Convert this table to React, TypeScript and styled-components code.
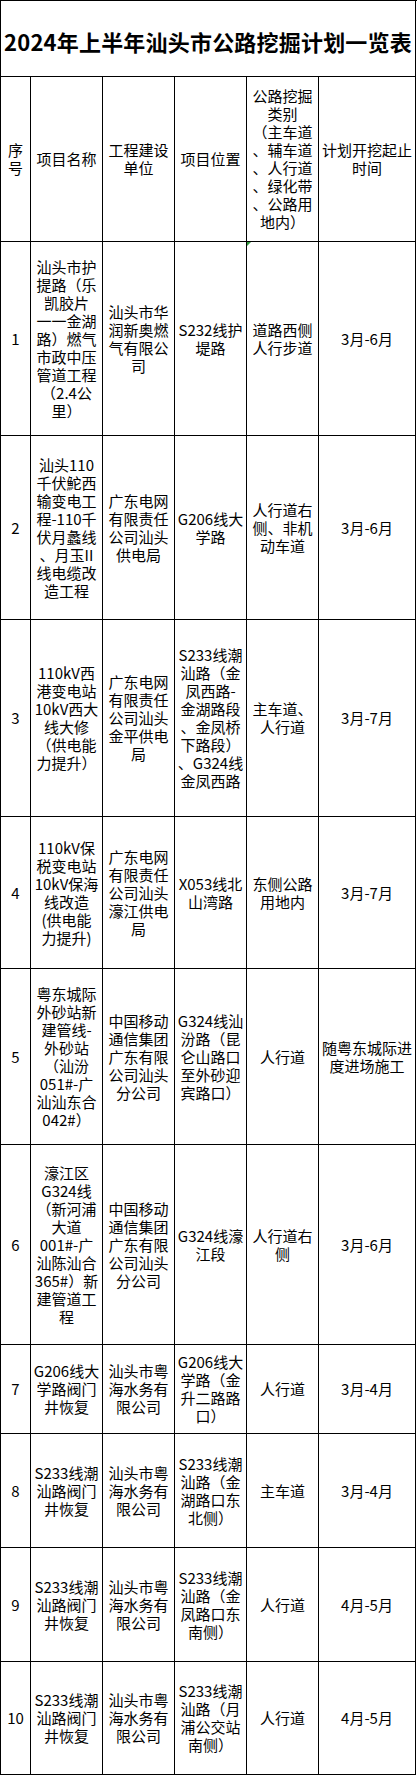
import styled, { createGlobalStyle } from "styled-components";

const GlobalStyle = createGlobalStyle`
  html, body {
    margin: 0;
    padding: 0;
    background: #ffffff;
  }
  body {
    font-family: "Noto Sans CJK SC", "Noto Sans", sans-serif;
    color: #000000;
  }
`;

const ROW_HEIGHTS = [165, 194, 184, 197, 152, 176, 200, 89, 114, 114, 113];

const Sheet = styled.div`
  width: 416px;
  display: grid;
  grid-template-columns: 30px 72px 72px 72px 72px 97px;
  grid-template-rows: 76px ${ROW_HEIGHTS.map((h) => `${h}px`).join(" ")};
  border-left: 1px solid #000;
  border-top: 1px solid #000;
  box-sizing: content-box;
`;

const Title = styled.div`
  grid-column: 1 / -1;
  display: flex;
  align-items: center;
  justify-content: center;
  padding-top: 5px;
  box-sizing: border-box;
  border-right: 1px solid #000;
  border-bottom: 1px solid #000;
  font-size: 22px;
  font-weight: 700;
  letter-spacing: 0.2px;
  white-space: nowrap;
`;

const Cell = styled.div`
  position: relative;
  display: flex;
  flex-direction: column;
  align-items: center;
  justify-content: center;
  box-sizing: border-box;
  border-right: 1px solid #000;
  border-bottom: 1px solid #000;
  font-size: 15px;
  line-height: 18px;
  text-align: center;
  overflow: hidden;
`;

const Line = styled.span`
  display: block;
  white-space: nowrap;
`;

const Marker = styled.span`
  position: absolute;
  left: 0;
  top: 0;
  width: 0;
  height: 0;
  border-top: 4px solid #2f9a3c;
  border-right: 4px solid transparent;
`;

type Row = {
  no: string;
  name: string[];
  unit: string[];
  place: string[];
  kind: string[];
  time: string[];
  marked?: boolean;
};

const header: string[][] = [
  ["序", "号"],
  ["项目名称"],
  ["工程建设", "单位"],
  ["项目位置"],
  ["公路挖掘", "类别", "（主车道", "、辅车道", "、人行道", "、绿化带", "、公路用", "地内）"],
  ["计划开挖起止", "时间"],
];

const waterCo = ["汕头市粤", "海水务有", "限公司"];
const mobileCo = ["中国移动", "通信集团", "广东有限", "公司汕头", "分公司"];

const rows: Row[] = [
  {
    no: "1",
    name: ["汕头市护", "提路（乐", "凯胶片", "一一金湖", "路）燃气", "市政中压", "管道工程", "（2.4公", "里）"],
    unit: ["汕头市华", "润新奥燃", "气有限公", "司"],
    place: ["S232线护", "堤路"],
    kind: ["道路西侧", "人行步道"],
    time: ["3月-6月"],
    marked: true,
  },
  {
    no: "2",
    name: ["汕头110", "千伏鮀西", "输变电工", "程-110千", "伏月蠡线", "、月玉II", "线电缆改", "造工程"],
    unit: ["广东电网", "有限责任", "公司汕头", "供电局"],
    place: ["G206线大", "学路"],
    kind: ["人行道右", "侧、非机", "动车道"],
    time: ["3月-6月"],
  },
  {
    no: "3",
    name: ["110kV西", "港变电站", "10kV西大", "线大修", "（供电能", "力提升）"],
    unit: ["广东电网", "有限责任", "公司汕头", "金平供电", "局"],
    place: ["S233线潮", "汕路（金", "凤西路-", "金湖路段", "、金凤桥", "下路段）", "、G324线", "金凤西路"],
    kind: ["主车道、", "人行道"],
    time: ["3月-7月"],
  },
  {
    no: "4",
    name: ["110kV保", "税变电站", "10kV保海", "线改造", "(供电能", "力提升)"],
    unit: ["广东电网", "有限责任", "公司汕头", "濠江供电", "局"],
    place: ["X053线北", "山湾路"],
    kind: ["东侧公路", "用地内"],
    time: ["3月-7月"],
  },
  {
    no: "5",
    name: ["粤东城际", "外砂站新", "建管线-", "外砂站", "（汕汾", "051#-广", "汕汕东合", "042#）"],
    unit: mobileCo,
    place: ["G324线汕", "汾路（昆", "仑山路口", "至外砂迎", "宾路口）"],
    kind: ["人行道"],
    time: ["随粤东城际进", "度进场施工"],
  },
  {
    no: "6",
    name: ["濠江区", "G324线", "（新河浦", "大道", "001#-广", "汕陈汕合", "365#）新", "建管道工", "程"],
    unit: mobileCo,
    place: ["G324线濠", "江段"],
    kind: ["人行道右", "侧"],
    time: ["3月-6月"],
  },
  {
    no: "7",
    name: ["G206线大", "学路阀门", "井恢复"],
    unit: waterCo,
    place: ["G206线大", "学路（金", "升二路路", "口）"],
    kind: ["人行道"],
    time: ["3月-4月"],
  },
  {
    no: "8",
    name: ["S233线潮", "汕路阀门", "井恢复"],
    unit: waterCo,
    place: ["S233线潮", "汕路（金", "湖路口东", "北侧）"],
    kind: ["主车道"],
    time: ["3月-4月"],
  },
  {
    no: "9",
    name: ["S233线潮", "汕路阀门", "井恢复"],
    unit: waterCo,
    place: ["S233线潮", "汕路（金", "凤路口东", "南侧）"],
    kind: ["人行道"],
    time: ["4月-5月"],
  },
  {
    no: "10",
    name: ["S233线潮", "汕路阀门", "井恢复"],
    unit: waterCo,
    place: ["S233线潮", "汕路（月", "浦公交站", "南侧）"],
    kind: ["人行道"],
    time: ["4月-5月"],
  },
];

function TextCell({ lines, marked }: { lines: string[]; marked?: boolean }) {
  return (
    <Cell>
      {marked && <Marker />}
      {lines.map((l, i) => (
        <Line key={i}>{l}</Line>
      ))}
    </Cell>
  );
}

export default function App() {
  return (
    <>
      <GlobalStyle />
      <Sheet>
        <Title>2024年上半年汕头市公路挖掘计划一览表</Title>
        {header.map((lines, i) => (
          <TextCell key={`h${i}`} lines={lines} />
        ))}
        {rows.map((r) => [
          <TextCell key={`${r.no}-no`} lines={[r.no]} />,
          <TextCell key={`${r.no}-name`} lines={r.name} />,
          <TextCell key={`${r.no}-unit`} lines={r.unit} />,
          <TextCell key={`${r.no}-place`} lines={r.place} />,
          <TextCell key={`${r.no}-kind`} lines={r.kind} marked={r.marked} />,
          <TextCell key={`${r.no}-time`} lines={r.time} />,
        ])}
      </Sheet>
    </>
  );
}
